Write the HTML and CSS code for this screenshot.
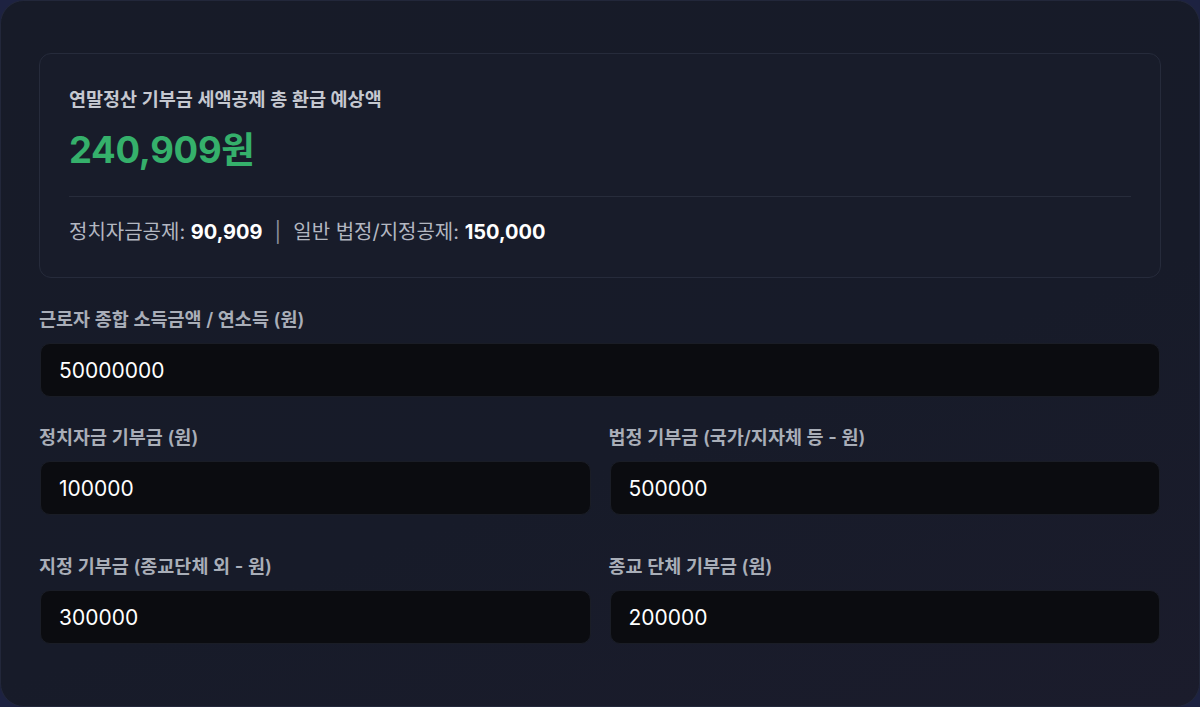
FILE: index.html
```html
<!DOCTYPE html>
<html lang="ko">
<head>
<meta charset="utf-8">
<link rel="stylesheet" href="styles.css">
</head>
<body>
<div class="card">
  <section class="summary">
    <div class="summary-label">연말정산 기부금 세액공제 총 환급 예상액</div>
    <div class="summary-total">240,909원</div>
    <div class="summary-divider"></div>
    <div class="summary-detail">정치자금공제: <b>90,909</b><span class="sep">|</span>일반 법정/지정공제: <b>150,000</b></div>
  </section>

  <div class="field">
    <label class="field-label">근로자 종합 소득금액 / 연소득 (원)</label>
    <div class="input">50000000</div>
  </div>

  <div class="grid">
    <div class="field">
      <label class="field-label">정치자금 기부금 (원)</label>
      <div class="input">100000</div>
    </div>
    <div class="field">
      <label class="field-label">법정 기부금 (국가/지자체 등 - 원)</label>
      <div class="input">500000</div>
    </div>
    <div class="field">
      <label class="field-label">지정 기부금 (종교단체 외 - 원)</label>
      <div class="input">300000</div>
    </div>
    <div class="field">
      <label class="field-label">종교 단체 기부금 (원)</label>
      <div class="input">200000</div>
    </div>
  </div>
</div>
</body>
</html>
```

FILE: styles.css
```css
html, body {
  margin: 0;
  padding: 0;
}
body {
  width: 1200px;
  height: 707px;
  background: #1d2241;
  font-family: "Inter", "Noto Sans CJK KR", sans-serif;
  overflow: hidden;
}
.card {
  box-sizing: border-box;
  width: 1200px;
  height: 707px;
  border-radius: 24px;
  border: 1px solid #22273a;
  background: linear-gradient(160deg, #171b28 0%, #171b29 60%, #1b1c2c 100%);
  padding: 52px 38px 0 38px;
  display: flex;
  flex-direction: column;
}
.summary {
  border: 1px solid #262b3b;
  border-radius: 12px;
  background: #181c2a;
  padding: 33px 29px 32px 29px;
  display: flex;
  flex-direction: column;
}
.summary-label {
  font-size: 18.5px;
  line-height: 24px;
  font-weight: 600;
  color: #c5c8d0;
}
.summary-total {
  margin-top: 17px;
  font-size: 36.5px;
  line-height: 44px;
  font-weight: 700;
  color: #35b06b;
  letter-spacing: -0.3px;
}
.summary-divider {
  margin-top: 24px;
  height: 1px;
  background: #272c3b;
}
.summary-detail {
  margin-top: 22px;
  font-size: 20px;
  line-height: 26px;
  color: #b3b7c1;
}
.summary-detail b {
  color: #ffffff;
  font-weight: 700;
}
.sep {
  color: #8b909b;
  margin: 0 12px;
}
.field {
  display: flex;
  flex-direction: column;
}
.card > .field {
  margin-top: 29px;
}
.field-label {
  font-size: 18.5px;
  line-height: 24px;
  font-weight: 600;
  color: #a9aeb8;
}
.input {
  box-sizing: border-box;
  margin-top: 12px;
  height: 54px;
  margin-left: 1px;
  margin-right: 1px;
  border-radius: 10px;
  background: #0b0c10;
  border: 1px solid #1a1d26;
  padding: 0 18px;
  display: flex;
  align-items: center;
  font-size: 21px;
  color: #ffffff;
}
.grid {
  margin-top: 28px;
  display: grid;
  grid-template-columns: 1fr 1fr;
  column-gap: 17px;
  row-gap: 39px;
}
```
